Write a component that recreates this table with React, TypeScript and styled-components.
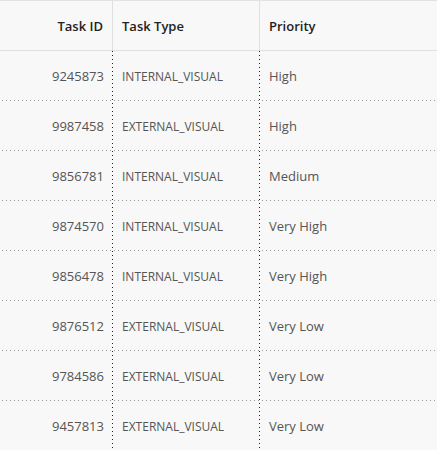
import React from "react";
import styled, { createGlobalStyle } from "styled-components";

const Global = createGlobalStyle`
  html, body { margin: 0; padding: 0; background: #f8f8f8; }
  body { font-family: "Open Sans", "Noto Sans", sans-serif; }
`;

const COLS = "113px 147px 1fr";

const Table = styled.div`
  width: 437px;
  border-top: 1px solid #e2e2e2;
  background: #f8f8f8;
`;

const HeaderRow = styled.div`
  display: grid;
  grid-template-columns: ${COLS};
  height: 49px;
  border-bottom: 1px solid #e0e0e0;
`;

const HeadCell = styled.div<{ $align?: "left" | "right"; $last?: boolean }>`
  display: flex;
  align-items: center;
  justify-content: ${(p) => (p.$align === "right" ? "flex-end" : "flex-start")};
  padding: 0 9px;
  border-right: ${(p) => (p.$last ? "none" : "1px solid #e0e0e0")};
  font-size: 13px;
  font-weight: 600;
  color: #222;
`;

const Row = styled.div`
  display: grid;
  grid-template-columns: ${COLS};
  height: 50px;
`;

const Cell = styled.div<{
  $align?: "left" | "right";
  $last?: boolean;
  $size?: number;
  $dx: number;
  $dy: number;
}>`
  display: flex;
  align-items: center;
  justify-content: ${(p) => (p.$align === "right" ? "flex-end" : "flex-start")};
  padding: 0 9px;
  font-size: ${(p) => p.$size ?? 13}px;
  color: #555;
  background-image: ${(p) =>
    [
      "linear-gradient(to right, #9a9a9a 0 1px, transparent 1px 4px)",
      p.$last ? null : "linear-gradient(to bottom, #222 0 1px, transparent 1px 4px)",
    ]
      .filter(Boolean)
      .join(", ")};
  background-size: ${(p) => (p.$last ? "4px 1px" : "4px 1px, 1px 4px")};
  background-repeat: ${(p) => (p.$last ? "repeat-x" : "repeat-x, repeat-y")};
  background-position: ${(p) =>
    p.$last
      ? `${p.$dx}px 100%`
      : `${p.$dx}px 100%, 100% ${p.$dy}px`};
`;

const rows = [
  ["9245873", "INTERNAL_VISUAL", "High"],
  ["9987458", "EXTERNAL_VISUAL", "High"],
  ["9856781", "INTERNAL_VISUAL", "Medium"],
  ["9874570", "INTERNAL_VISUAL", "Very High"],
  ["9856478", "INTERNAL_VISUAL", "Very High"],
  ["9876512", "EXTERNAL_VISUAL", "Very Low"],
  ["9784586", "EXTERNAL_VISUAL", "Very Low"],
  ["9457813", "EXTERNAL_VISUAL", "Very Low"],
];

export default function App() {
  return (
    <>
      <Global />
      <Table>
        <HeaderRow>
          <HeadCell $align="right">Task ID</HeadCell>
          <HeadCell>Task Type</HeadCell>
          <HeadCell $last>Priority</HeadCell>
        </HeaderRow>
        {rows.map((r, i) => {
          const top = 51 + i * 50;
          const dy = (4 - ((top - 3) % 4)) % 4;
          return (
            <Row key={r[0]}>
              <Cell $align="right" $dx={2} $dy={dy}>
                {r[0]}
              </Cell>
              <Cell $size={12} $dx={1} $dy={dy}>
                {r[1]}
              </Cell>
              <Cell $last $dx={2} $dy={dy}>
                {r[2]}
              </Cell>
            </Row>
          );
        })}
      </Table>
    </>
  );
}
